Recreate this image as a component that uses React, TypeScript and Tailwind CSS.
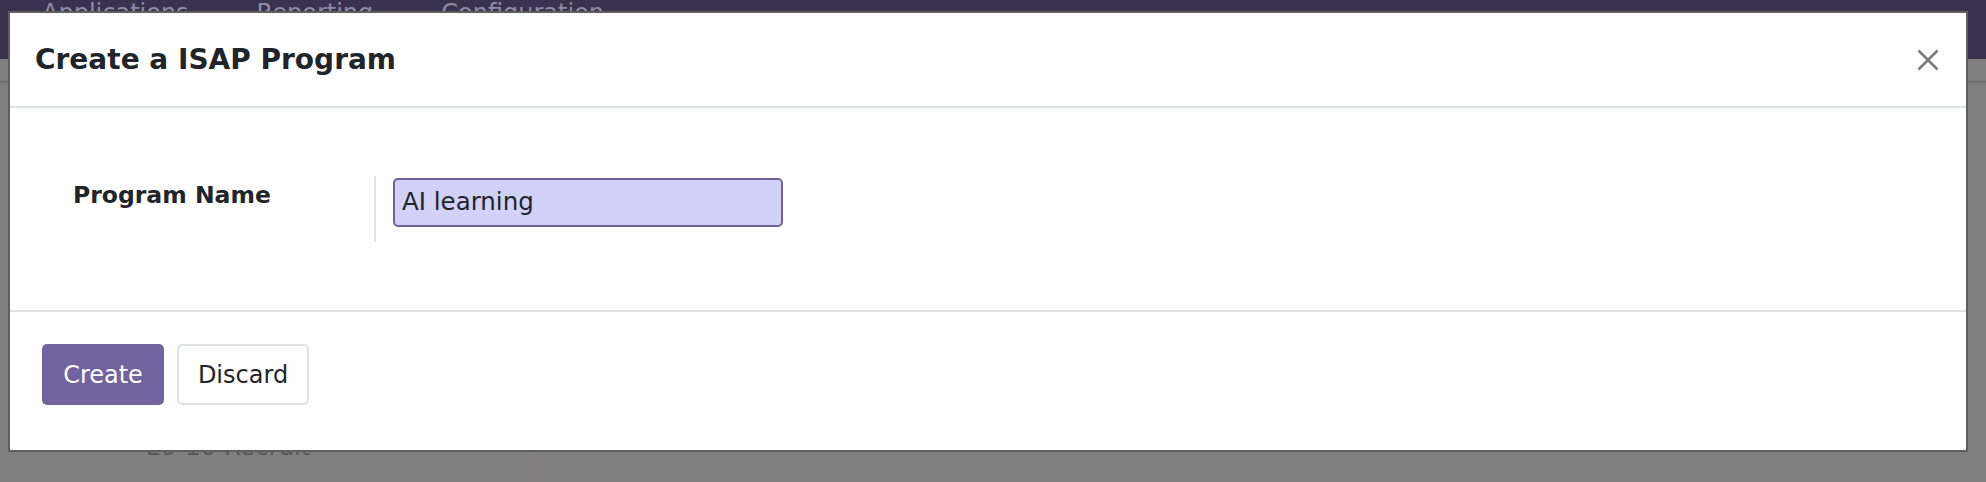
const font = { fontFamily: '"DejaVu Sans", "Liberation Sans", sans-serif' };

function CloseIcon() {
  return (
    <svg width="22" height="22" viewBox="0 0 22 22" className="text-[#7b7b7b]">
      <path d="M1.5 1.5 L20.5 20.5 M20.5 1.5 L1.5 20.5" stroke="currentColor" strokeWidth="2.6" strokeLinecap="butt" fill="none" />
    </svg>
  );
}

function Backdrop() {
  // the page behind the dialog, dimmed by the overlay
  return (
    <div className="flex h-full flex-col">
      <div className="flex h-[59px] shrink-0 items-start gap-[68px] bg-[#38324f] pl-[42px]">
        {['Applications', 'Reporting', 'Configuration'].map(t => (
          <span key={t} className="mt-[1px] text-[24px] leading-[24px] text-[#8f8ba5]">{t}</span>
        ))}
      </div>
      <div className="h-[22px] shrink-0" />
      <div className="h-[2px] shrink-0 bg-[#6f6f6f]" />
      <div className="mt-auto flex h-[52px] shrink-0">
        <div className="w-[531px] pl-[146px]">
          <span className="mt-[5px] block text-[24.5px] leading-[24px] text-[#585858]">29 10 Recruit</span>
        </div>
        <div className="h-full w-[3px] bg-[#877c80]" />
      </div>
    </div>
  );
}

function Dialog() {
  return (
    <div className="absolute left-[8px] top-[11px] w-[1960px] border-2 border-[#5e5e5e] bg-white text-[#212529]">
      {/* header */}
      <div className="flex h-[95px] items-center justify-between border-b-2 border-[#dfe2e6] pl-[25px] pr-[27px]">
        <h4 className="text-[28px] font-bold leading-none">Create a ISAP Program</h4>
        <CloseIcon />
      </div>

      {/* body */}
      <div className="h-[204px] border-b-2 border-[#dfe2e6] pt-[68px]">
        <div className="flex items-start">
          <div className="w-[364px] shrink-0 pl-[63px] pt-[2px]">
            <label className="text-[23.5px] font-bold leading-[35px]">Program Name</label>
          </div>
          <div className="border-l-2 border-[#e3e3e3] pb-[15px] pl-[17px] pt-[2px]">
            <input
              defaultValue="AI learning"
              className="h-[49px] w-[390px] rounded-[5px] border-2 border-[#6f6399] bg-[#d2d2f9] px-[7px] pb-[3px] text-[24.5px] text-[#212529] outline-none"
              style={font}
            />
          </div>
        </div>
      </div>

      {/* footer */}
      <div className="flex h-[138px] items-start gap-[13px] pl-[32px] pt-[32px]">
        <button className="flex h-[61px] w-[122px] items-center justify-center rounded-[5px] bg-[#71639e] text-[24px] text-white">
          Create
        </button>
        <button className="flex h-[61px] w-[132px] items-center justify-center rounded-[5px] border-2 border-[#dee2e6] bg-white text-[24px] text-[#212529]">
          Discard
        </button>
      </div>
    </div>
  );
}

export default function App() {
  return (
    <div className="relative h-[482px] w-[1986px] overflow-hidden bg-[#7f7f7f]" style={font}>
      <Backdrop />
      <Dialog />
    </div>
  );
}
